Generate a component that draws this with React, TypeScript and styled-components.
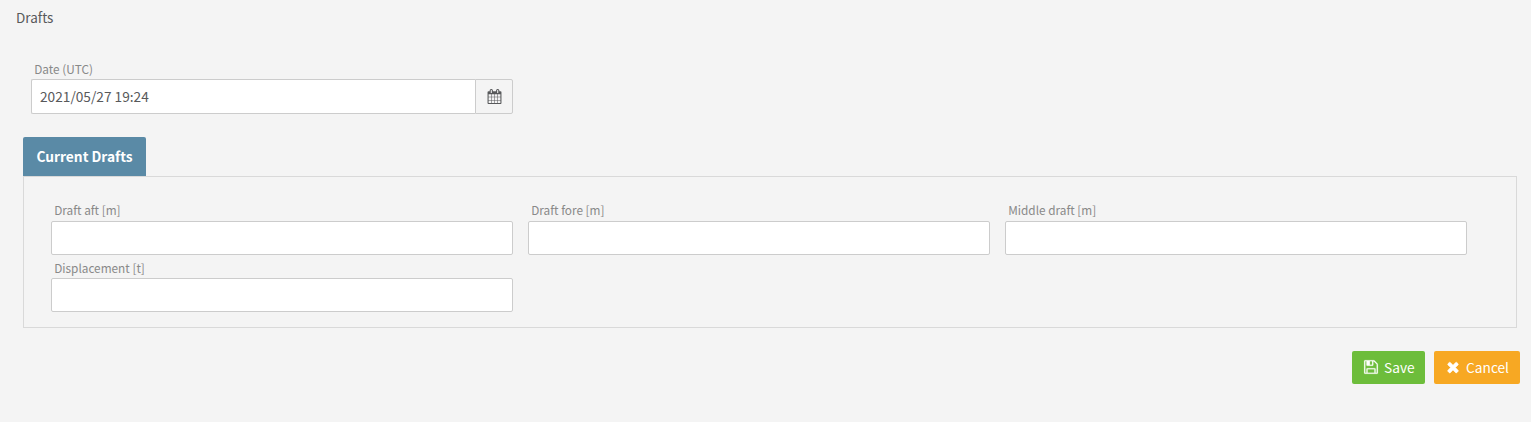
import React from "react";
import styled, { createGlobalStyle } from "styled-components";

const GlobalStyle = createGlobalStyle`
  * { box-sizing: border-box; }
  body {
    margin: 0;
    background: #f4f4f4;
    color: #58595b;
    font-family: "Source Sans Pro", "Noto Sans CJK SC", sans-serif;
    font-size: 13.7px;
  }
  input, button { font: inherit; color: inherit; }
`;

const Page = styled.main`
  min-height: 422px;
  padding: 7px 11px 0 16px;
`;

const Title = styled.h1`
  margin: 0;
  font-size: 13.5px;
  font-weight: 400;
  line-height: 20px;
`;

const DateRow = styled.div`
  width: 482px;
  margin: 32.6px 0 0 15px;
`;

const Label = styled.label`
  display: block;
  height: 19.4px;
  padding-left: 3.2px;
  font-size: 11.8px;
  line-height: 18px;
  color: #898989;
  white-space: nowrap;
`;

const TextInput = styled.input`
  display: block;
  width: 100%;
  height: 34px;
  padding: 0 8px;
  border: 1px solid #cccccc;
  border-radius: 2px;
  background: #ffffff;
  outline: none;
`;

const InputGroup = styled.div`
  display: flex;
  height: 35px;
`;

const DateInput = styled(TextInput)`
  flex: 1;
  width: auto;
  height: 35px;
  padding-bottom: 1px;
  border-right: 0;
  border-radius: 2px 0 0 2px;
`;

const Addon = styled.button`
  display: flex;
  align-items: center;
  justify-content: center;
  width: 38px;
  padding: 0;
  border: 1px solid #cccccc;
  border-radius: 0 2px 2px 0;
  background: #f4f4f4;
`;

const Tab = styled.button`
  display: block;
  width: 123px;
  height: 39px;
  margin: 23px 0 0 7px;
  padding: 0;
  border: 0;
  border-radius: 2px 2px 0 0;
  background: #5a8aa6;
  color: #ffffff;
  font-size: 13.75px;
  font-weight: 700;
  line-height: 39px;
`;

const Panel = styled.section`
  display: grid;
  grid-template-columns: repeat(3, 462px);
  column-gap: 15px;
  row-gap: 4px;
  align-content: start;
  width: 1494px;
  height: 152px;
  margin-left: 7px;
  padding: 24.4px 27px 0;
  border: 1px solid #d9d9d9;
`;

const Field = styled.div`
  display: flex;
  flex-direction: column;
  height: 53.4px;
`;

const Actions = styled.footer`
  display: flex;
  justify-content: flex-end;
  gap: 9px;
  margin-top: 23px;
`;

const ActionButton = styled.button<{ $color: string; $width: number }>`
  display: flex;
  align-items: center;
  gap: 5.3px;
  width: ${(p) => p.$width}px;
  height: 33px;
  padding: 0 0 0 10.8px;
  border: 0;
  border-radius: 2px;
  background: ${(p) => p.$color};
  color: #ffffff;
  line-height: 33px;
  white-space: nowrap;
`;

const Glyph = styled.svg`
  display: block;
  flex: none;
  fill: currentColor;
`;

const paths = {
  calendar:
    "M192 1664h288v-288h-288v288zm352 0h320v-288h-320v288zm-352-352h288v-320h-288v320zm352 0h320v-320h-320v320zm-352-384h288v-288h-288v288zm736 736h320v-288h-320v288zm-384-736h320v-288h-320v288zm768 736h288v-288h-288v288zm-384-352h320v-320h-320v320zm-352-864v-288q0-13-9.5-22.5t-22.5-9.5h-64q-13 0-22.5 9.5t-9.5 22.5v288q0 13 9.5 22.5t22.5 9.5h64q13 0 22.5-9.5t9.5-22.5zm736 864h288v-320h-288v320zm-384-384h320v-288h-320v288zm384 0h288v-288h-288v288zm32-480v-288q0-13-9.5-22.5t-22.5-9.5h-64q-13 0-22.5 9.5t-9.5 22.5v288q0 13 9.5 22.5t22.5 9.5h64q13 0 22.5-9.5t9.5-22.5zm384-64v1280q0 52-38 90t-90 38h-1408q-52 0-90-38t-38-90v-1280q0-52 38-90t90-38h128v-96q0-66 47-113t113-47h64q66 0 113 47t47 113v96h384v-96q0-66 47-113t113-47h64q66 0 113 47t47 113v96h128q52 0 90 38t38 90z",
  save: "M512 1536h768v-384h-768v384zm896 0h128v-896q0-14-10-38.5t-20-34.5l-281-281q-10-10-34-20t-39-10v416q0 40-28 68t-68 28h-576q-40 0-68-28t-28-68v-416h-128v1280h128v-416q0-40 28-68t68-28h832q40 0 68 28t28 68v416zm-384-928v-320q0-13-9.5-22.5t-22.5-9.5h-192q-13 0-22.5 9.5t-9.5 22.5v320q0 13 9.5 22.5t22.5 9.5h192q13 0 22.5-9.5t9.5-22.5zm640 32v928q0 40-28 68t-68 28h-1344q-40 0-68-28t-28-68v-1344q0-40 28-68t68-28h928q40 0 88 20t76 48l280 280q28 28 48 76t20 88z",
  close:
    "M1490 1322q0 40-28 68l-136 136q-28 28-68 28t-68-28l-294-294-294 294q-28 28-68 28t-68-28l-136-136q-28-28-28-68t28-68l294-294-294-294q-28-28-28-68t28-68l136-136q28-28 68-28t68 28l294 294 294-294q28-28 68-28t68 28l136 136q28 28 28 68t-28 68l-294 294 294 294q28 28 28 68z",
};

type IconProps = { name: keyof typeof paths; size?: number; weight?: number };

function Icon({ name, size = 16, weight = 0 }: IconProps) {
  return (
    <Glyph width={size} height={size} viewBox="0 0 1792 1792" aria-hidden="true">
      <path d={paths[name]} stroke="currentColor" strokeWidth={weight} />
    </Glyph>
  );
}

const fields = ["Draft aft [m]", "Draft fore [m]", "Middle draft [m]", "Displacement [t]"];

export default function App() {
  return (
    <>
      <GlobalStyle />
      <Page>
        <Title>Drafts</Title>
        <DateRow>
          <Label htmlFor="date">Date (UTC)</Label>
          <InputGroup>
            <DateInput id="date" defaultValue="2021/05/27 19:24" />
            <Addon type="button" aria-label="Pick a date">
              <Icon name="calendar" size={15} />
            </Addon>
          </InputGroup>
        </DateRow>
        <Tab type="button">Current Drafts</Tab>
        <Panel>
          {fields.map((label) => (
            <Field key={label}>
              <Label>{label}</Label>
              <TextInput aria-label={label} />
            </Field>
          ))}
        </Panel>
        <Actions>
          <ActionButton type="button" $color="#6dbd3b" $width={73}>
            <Icon name="save" weight={20} />
            Save
          </ActionButton>
          <ActionButton type="button" $color="#f7a823" $width={86}>
            <Icon name="close" weight={60} />
            Cancel
          </ActionButton>
        </Actions>
      </Page>
    </>
  );
}
